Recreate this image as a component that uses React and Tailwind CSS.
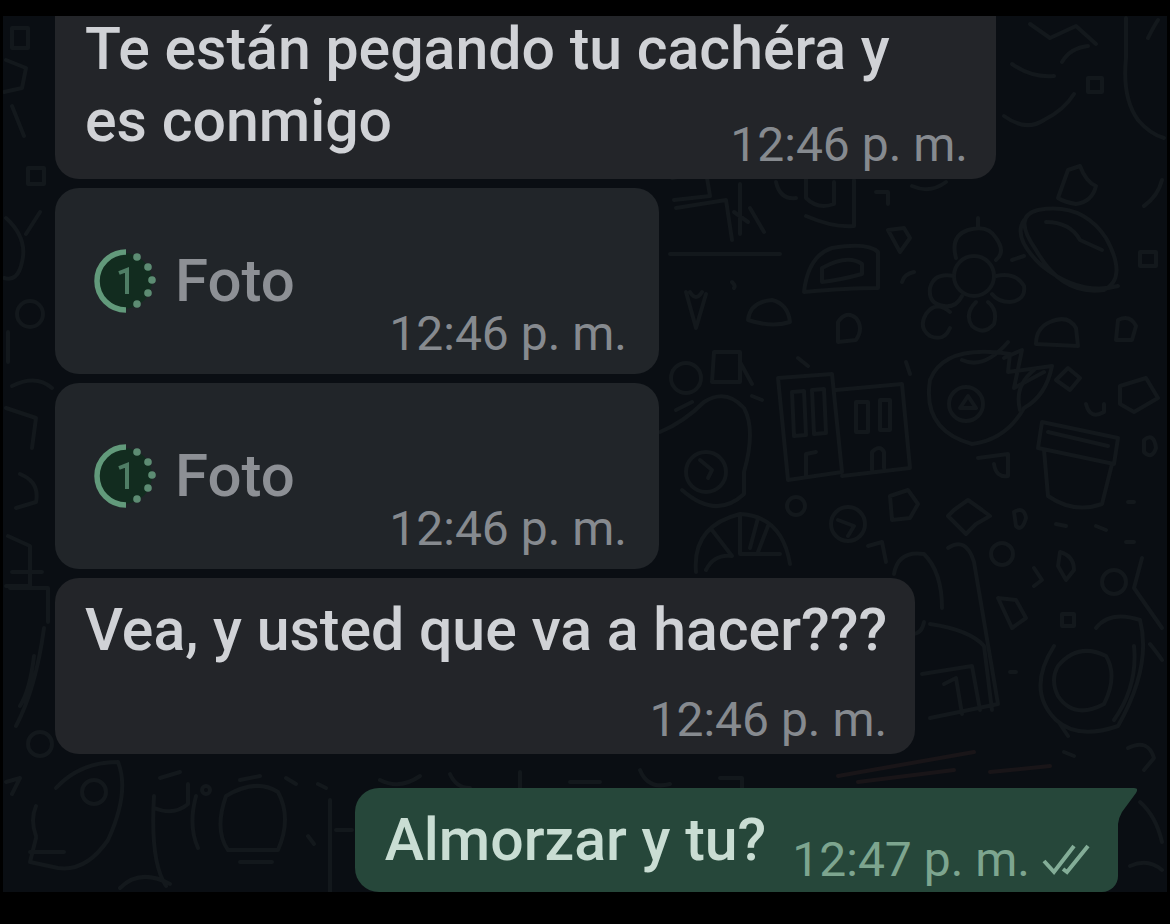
import React from "react";

function Wallpaper() {
  return (
    <svg
      className="absolute inset-0 h-full w-full"
      viewBox="0 14 1170 876"
      preserveAspectRatio="xMidYMid slice"
      fill="none"
      stroke="#13181c"
      strokeWidth="4"
      strokeLinecap="round"
      strokeLinejoin="round"
      aria-hidden="true"
    >
      {/* top right: branch, bird, ribbon */}
      <path d="M1012 62q20 14 42 12M1062 60q8-14 26-16M1030 22l20 14 26-12 20 18M1004 114q22 16 40 4 20-10 30-26M1126 16v40q-4 40 12 62 12 14 26 18M1088 76h14v14h-14zM1148 36q6-12 10-18" />
      {/* cake, candle and flag */}
      <path d="M672 176l34-6 4 24-36 4M676 206l50-8 6 40M670 252h110M740 182v50M734 210l14 10M750 206l14 24M776 180q4 18 20 16M806 176v20q12 12 28 6V180M806 214q28 12 48 10V178M876 190h12v12M912 184q18 8 34-4" />
      <path d="M804 290q4-36 28-44 36-6 46 4v36q-30 0-74 4zM822 266q26-14 40-4v10q-22 6-40 8zM888 228l16-2 6 10-10 14z" />
      <path d="M686 290l10 36 10-34M690 290q6 10 12 0M748 318q2-18 24-20 16 4 18 22-18 6-42-2zM838 340v-20q8-12 18-4 8 10 0 22zM732 280q4 4 2 6" />
      {/* flower cluster */}
      <circle cx="974" cy="274" r="20" />
      <path d="M956 256q-6-22 12-28 20-6 28 8 10 14 0 22M954 274q-20-4-24 12-2 16 14 18 12 2 18-10M996 274q20-4 28 10 2 14-14 16-12 0-18-8M950 310q-14-12-24 2-8 14 4 22 14 6 20-8M976 300q-12 12-4 24 12 10 22-2 4-14-6-22M978 226v-10M1012 258l12-4M914 270q-10 2-12 10" />
      {/* planet */}
      <path d="M1036 248q-24-34 2-40 44-8 68 28 22 40-2 52-42 6-68-40zM1024 218q-12 18 18 46 38 30 76 20M1046 220q24 0 34 18l22 10" />
      <path d="M1068 168l12-4q6 16 16 20-4 16-20 18-12-2-18-6zM1036 342q0-16 14-22 18-8 26 6l2 18zM1118 318q12-6 18 6l-4 14-16 0zM1144 204q14-10 18-26M1140 250h16v14h-16z" />
      {/* camera and small icons */}
      <circle cx="686" cy="376" r="15" />
      <path d="M714 350h26v30h-28zM740 360l12 22M676 408l16-8M752 394l10 4M798 356l10 8M906 360l4 12" />
      {/* face */}
      <path d="M660 430q24-10 44-30 22-14 40 6 12 22 0 64v22q-28 26-62-4" />
      <circle cx="706" cy="470" r="20" />
      <path d="M700 458l12 10-4 8" />
      {/* buildings */}
      <path d="M778 376l54-4 10 98-54 8zM836 388l66-6 8 84-68 8M792 390l12-1 2 44-12 1zM812 388l12-1 2 44-12 1zM856 400h12v30h-12zM880 398h10v30h-10zM872 468v-18q8-8 12 0v16M806 474v-22l10-2" />
      {/* bird */}
      <path d="M1010 352q-66-10-80 26-8 50 42 64 34-4 52-36 22-12 28-42l-44 6zM962 358q22 10 46-18M1004 356l18-8-8 38 30-16" />
      <circle cx="966" cy="402" r="17" />
      <path d="M960 406l8-12 8 12zM1034 368q-20 16-14 40M1068 366l12 10-10 12-14-10zM1086 402q4 16 18 8v-8M1120 384l26-8 12 20-24 14-14-8zM1144 438q10-8 12 8-4 12-12 4z" />
      {/* pot */}
      <path d="M1042 420l76 16-4 26-76-16zM1048 430l60 14M1044 448l4 46q26 18 54 8l10-40M978 456l30-4v22q-12 2-14-12" />
      <path d="M890 494l18-6 10 14-8 14-18 2zM954 508l14-10 14 10 8 6-14 8-10 10-10-10-8-8zM1014 510q10-6 12 6-4 14-10 8zM1056 522l10 2M1096 524l10 4M1128 500h6M1126 540h8" />
      <circle cx="796" cy="504" r="9" />
      <circle cx="848" cy="522" r="17" />
      <circle cx="1002" cy="552" r="11" />
      <path d="M838 518l16 6-6 10M1060 550q14 4 14 18l-8 10-8-14z" />
      {/* clock */}
      <path d="M696 570q-4-46 44-58 42 2 50 50M740 512v40h40M712 528l20 26M706 568q8-16 26-14M758 516l-8 30M768 524l-10 26" />
      {/* guitar and box */}
      <path d="M868 544l14-4 4 20M894 572q4-24 30-20 18 18 18 54M948 546q18-12 26 14l24 142-68 14M930 622q40 6 54 22l8 64M922 672l50-8 8 44M944 682l12-6 6 36M912 632q10 0 12-12" />
      <circle cx="1114" cy="580" r="12" />
      <path d="M1034 566l8 12-8 6M998 596l18 2 10 18-14 10zM1062 612h12v12h-12zM1142 556l-8 30 28 40M1150 642q8 10 12 16" />
      {/* headphones */}
      <path d="M1054 644q-28 44 2 74 22 20 62 6 34-60 22-106-30-10-44 8M1134 644q4 40-20 74M1058 664q20-24 48-10 12 20-2 48-30 16-46-8-8-16 0-30zM1060 722l8 12M1010 670h6" />
      <path d="M1128 746q20-10 26 10l-10 12M1064 750l10 4" />
      <path d="M838 774l136-24M858 780l96-12M990 770l60-6" stroke="#191518" />
      {/* left margin */}
      <path d="M12 26h16v20H12zM6 58l20 8-4 20-18 4M12 104l12 30M28 166h16v16H28zM6 216q22 20 16 44-4 20-18 16M40 210l-14 22" />
      <circle cx="30" cy="312" r="13" />
      <path d="M8 330v30M12 384q24-12 40 2M6 406l30 10-4 30M20 472q20 8 16 28l-20 6M8 534l22 10v40H6M10 586h38v34M12 570h30M44 626q-8 60-28 98M34 654q-4 34-14 50" />
      <circle cx="40" cy="742" r="12" />
      {/* bottom left */}
      <path d="M56 786q24-26 62-26 12 30-10 78-22 32-50 28l-28-6 6-24M36 804q-6 14 0 30M6 780l14-4-8 16M30 850h34" />
      <circle cx="94" cy="790" r="12" />
      <path d="M154 794q-4 66 12 90M154 806q20 8 34-4V782M160 776l20-6M196 794q-8 30 2 52M226 794q30-18 52-4 14 26 0 58h-50q-14-20-2-54zM240 778l20-4M240 860h32M330 798v92M336 828h16M120 886q20-20 50-4M286 776l10 6M318 782l8 4M308 834l6 8" />
      <circle cx="206" cy="788" r="4" />
      <path d="M380 778q20 10 40-4M450 772q6 14 20 14M520 770v16M570 780h30M640 768q8 20 30 14M720 776h22v14M1140 800q16 14 22 40M1130 864q18-8 32 4" />
    </svg>
  );
}

function ViewOnceIcon() {
  return (
    <svg className="h-16 w-16 shrink-0" viewBox="0 0 64 64" fill="none" aria-hidden="true">
      <circle cx="31" cy="32" r="28" fill="#122c1f" />
      <path d="M33 3A29 29 0 0 0 33 61" stroke="#629a7b" strokeWidth="5.5" />
      <g fill="#5d8c73">
        <circle cx="44" cy="8" r="3.8" />
        <circle cx="55" cy="18" r="3.8" />
        <circle cx="59" cy="31" r="3.8" />
        <circle cx="55" cy="44" r="3.8" />
        <circle cx="44" cy="55" r="3.8" />
      </g>
      <path d="M26 24l8-3v24" stroke="#4f7d65" strokeWidth="4" />
    </svg>
  );
}

function DoubleCheck() {
  return (
    <svg className="h-9 w-12 shrink-0" viewBox="0 0 48 36" fill="none" stroke="#83ad97" strokeWidth="4" role="img" aria-label="Entregado">
      <path d="M2 19l10 11L32 4M21 27l4 3L46 4" />
    </svg>
  );
}

function Time({ children, tone = "text-[#868a8f]", className = "" }) {
  return (
    <time className={`whitespace-nowrap text-[48px] leading-[52px] font-normal ${tone} ${className}`}>{children}</time>
  );
}

function PhotoMessage() {
  return (
    <article className="flex h-[186px] w-[604px] max-w-full flex-col justify-between rounded-[24px] bg-[#212529] pt-[57px] pr-8 pb-[14px] pl-[38px]">
      <button type="button" className="flex items-center gap-[18px] self-start text-[60px] leading-[72px] font-medium text-[#8d9095]">
        <ViewOnceIcon />
        Foto
      </button>
      <Time className="-mt-5 self-end">12:46 p. m.</Time>
    </article>
  );
}

export default function App() {
  return (
    <div className="min-h-screen bg-black pt-4 font-['Roboto','Liberation_Sans',sans-serif]">
      <main className="relative mx-[3px] bg-[#0a0e13]">
        <Wallpaper />
        <div className="relative flex flex-col items-start gap-[9px] pr-[49px] pl-[52px] text-[59px] leading-[72px] font-medium text-[#d0d2d6]">
          <article className="w-[941px] max-w-full rounded-b-[24px] bg-[#232529] pr-7 pb-[22px] pl-[30px]">
            <p className="-mt-[3px]">
              Te están pegando tu cachéra y<br />
              es conmigo
              <Time className="float-right mt-[34px] -mb-[14px]">12:46 p. m.</Time>
            </p>
          </article>
          <PhotoMessage />
          <PhotoMessage />
          <article className="flex max-w-full flex-col rounded-[24px] bg-[#232529] pt-4 pr-7 pb-2 pl-[30px]">
            <p>Vea, y usted que va a hacer???</p>
            <Time className="mt-7 self-end">12:46 p. m.</Time>
          </article>
          <article className="relative mt-[25px] flex items-end gap-[26px] self-end rounded-l-[24px] rounded-br-[16px] bg-[#26473a] pt-4 pr-7 pb-4 pl-[30px] text-[#c9ddd3]">
            <svg className="absolute top-0 left-full h-9 w-5" viewBox="0 0 20 36" preserveAspectRatio="none" aria-hidden="true">
              <path d="M-1 0H16Q21 0 18 5L4 24Q1 29 0 36H-1z" fill="#26473a" />
            </svg>
            <p>Almorzar y tu?</p>
            <div className="-mb-[10px] flex items-center gap-3">
              <Time tone="text-[#7da58f]">12:47 p. m.</Time>
              <DoubleCheck />
            </div>
          </article>
        </div>
      </main>
    </div>
  );
}
